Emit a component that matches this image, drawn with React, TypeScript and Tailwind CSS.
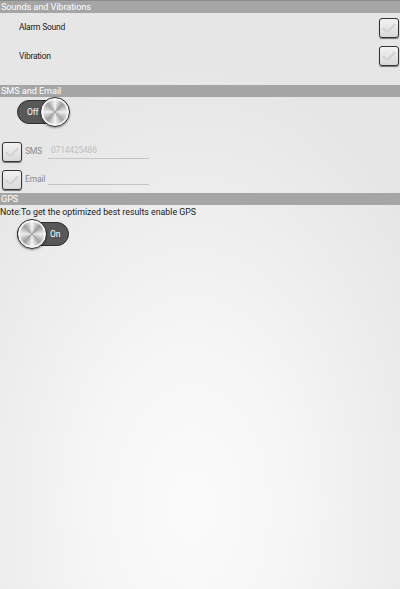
import type { ReactNode } from "react";

const font = { fontFamily: "Roboto, 'Liberation Sans', sans-serif" };

function SectionBar({ children }: { children: ReactNode }) {
  return (
    <div className="flex h-[12px] items-center bg-[#a5a5a5] pl-px text-[9.2px] leading-none tracking-[-0.1px] text-white">
      {children}
    </div>
  );
}

function Check() {
  return (
    <span className="grid h-[20px] w-[20px] place-items-center rounded-[3px] border-[1.5px] border-[#333] bg-gradient-to-b from-[#f2f2f2] to-[#d9d9d9] shadow-[0_1px_1px_rgba(0,0,0,0.5)]">
      <svg viewBox="0 0 20 20" className="h-[16px] w-[16px]">
        <path d="M3 11 L8 15 L17 6" fill="none" stroke="#d2d2d2" strokeWidth="2.4" strokeLinecap="round" strokeLinejoin="round" />
      </svg>
    </span>
  );
}

function Knob() {
  return (
    <span className="relative z-10 h-[30px] w-[30px] shrink-0 rounded-full border border-[#2e2e2e] bg-[conic-gradient(from_0deg,#f4f4f4,#9a9a9a_12%,#eeeeee_25%,#a6a6a6_38%,#f6f6f6_50%,#9c9c9c_62%,#efefef_75%,#a2a2a2_88%,#f4f4f4)] shadow-[inset_0_0_0_2px_rgba(255,255,255,0.8),0_1px_2px_rgba(0,0,0,0.4)]" />
  );
}

function Toggle({ on }: { on: boolean }) {
  return (
    <div className="relative flex h-[30px] w-[52px] items-center">
      <div className="absolute inset-x-0 top-[3px] h-[24px] rounded-full border border-[#2f2f2f] bg-[#585858]" />
      {on ? (
        <>
          <Knob />
          <span className="relative ml-[3px] text-[8.5px] tracking-[-0.2px] text-white">On</span>
        </>
      ) : (
        <>
          <span className="relative ml-[10px] mr-[2px] text-[8.5px] tracking-[-0.2px] text-white">Off</span>
          <Knob />
        </>
      )}
    </div>
  );
}

export default function App() {
  return (
    <div
      style={font}
      className="h-[589px] w-[400px] overflow-hidden bg-[radial-gradient(ellipse_70%_75%_at_48%_86%,#fbfbfb_0%,#f6f6f6_35%,#ececec_75%,#e6e6e6_100%)] text-[#222]"
    >
      <div className="h-px bg-[#8c8c8c]" />
      <SectionBar>Sounds and Vibrations</SectionBar>
      <div className="flex h-[29px] items-center justify-between pl-[19px] pr-[1px] text-[8.5px] tracking-[-0.25px]">
        <span>Alarm Sound</span>
        <Check />
      </div>
      <div className="flex h-[28px] items-center justify-between pl-[19px] pr-[1px] text-[8.5px] tracking-[-0.25px]">
        <span>Vibration</span>
        <Check />
      </div>
      <div className="h-[15px]" />
      <SectionBar>SMS and Email</SectionBar>
      <div className="flex h-[40px] items-start pl-[17px]">
        <Toggle on={false} />
      </div>
      <div className="flex h-[29px] items-center gap-[3px] pl-[2px] text-[8.5px] tracking-[-0.2px] text-[#8a8a8a]">
        <Check />
        <span className="w-[20px]">SMS</span>
        <div className="flex w-[101px] items-end border-b border-[#c4c4c4] pb-[1px] pl-[3px] text-[#c0c0c0]">
          0714425486
        </div>
      </div>
      <div className="flex h-[27px] items-center gap-[3px] pl-[2px] text-[8.5px] tracking-[-0.2px] text-[#8a8a8a]">
        <Check />
        <span className="w-[20px]">Email</span>
        <div className="mt-[10px] h-px w-[101px] bg-[#c4c4c4]" />
      </div>
      <SectionBar>GPS</SectionBar>
      <div className="flex h-[14px] items-center text-[8.8px] leading-none text-[#1a1a1a]">
        Note:To get the optimized best results enable GPS
      </div>
      <div className="flex h-[30px] items-center pl-[17px]">
        <Toggle on={true} />
      </div>
    </div>
  );
}
